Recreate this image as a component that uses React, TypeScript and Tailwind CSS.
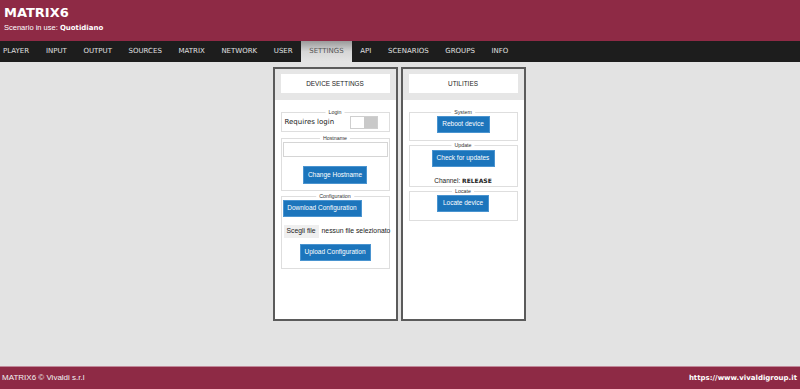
import React from "react";

const NAV = ["PLAYER", "INPUT", "OUTPUT", "SOURCES", "MATRIX", "NETWORK", "USER", "SETTINGS", "API", "SCENARIOS", "GROUPS", "INFO"];

const sans = "font-['Liberation_Sans',Arial,sans-serif]";
const verd = "font-['DejaVu_Sans',Verdana,sans-serif]";

function Btn({ label, w }: { label: string; w: string }) {
  return (
    <button
      className={`${w} bg-[#1c75bc] border border-[#4a94d0] text-white text-[6.5px] ${sans} leading-none whitespace-nowrap`}
    >
      {label}
    </button>
  );
}

// fieldset-like box, the legend sits on the top border
function Group({ title, children, className = "" }: { title: string; children: React.ReactNode; className?: string }) {
  return (
    <div className={`relative border border-[#dedede] ${className}`}>
      <span
        className={`absolute -top-[4px] left-1/2 -translate-x-1/2 bg-white px-[3px] text-[5.3px] leading-[6px] text-[#333] whitespace-nowrap ${sans}`}
      >
        {title}
      </span>
      {children}
    </div>
  );
}

function Panel({ title, children }: { title: string; children: React.ReactNode }) {
  return (
    <div className="w-[125px] h-[254px] border-2 border-[#5b5b5b] bg-white flex flex-col">
      <div className="bg-[#e6e6e6] px-[6px] pt-[5px] pb-[7px]">
        <div className={`bg-white h-[19px] flex items-center justify-center text-[6.4px] text-[#222] ${sans}`}>
          {title}
        </div>
      </div>
      <div className="px-[6px] pt-[12px] flex flex-col">{children}</div>
    </div>
  );
}

export default function App() {
  return (
    <div className="h-screen flex flex-col bg-[#e3e3e3]">
      {/* header */}
      <div className="h-[41px] bg-[#8e2a45] px-[4px] pt-[5px] text-white">
        <div className={`${verd} font-bold text-[13px] leading-[15px]`}>MATRIX6</div>
        <div className={`mt-[3px] text-[7.5px] leading-[9px] ${sans}`}>
          Scenario in use: <span className={`${verd} font-bold text-[7px]`}>Quotidiano</span>
        </div>
      </div>

      {/* nav */}
      <div className="h-[21px] bg-[#1d1d1d] flex">
        {NAV.map((item, i) => (
          <div
            key={item}
            className={`h-full flex items-center ${i === 0 ? "pl-[3px] pr-[8.5px]" : "px-[8.3px]"} text-[7px] ${verd} ${
              item === "SETTINGS"
                ? "bg-gradient-to-b from-[#9a9a9a] via-[#d6d6d6] to-[#e4e4e4] text-[#555]"
                : "text-[#e0e0e0]"
            }`}
          >
            {item}
          </div>
        ))}
      </div>

      {/* content */}
      <div className="flex-1 flex justify-center gap-[3px] pt-[5px] pr-[2px]">
        <Panel title="DEVICE SETTINGS">
          <Group title="Login" className="h-[20px] pl-[3px] pt-[3px]">
            <div className="h-[13px] flex items-center justify-between">
              <span className={`${verd} text-[7px] text-[#222]`}>Requires login</span>
              <div className="w-[28px] h-[13px] border border-[#cfcfcf] bg-[#c9c9c9] flex mr-[11px]">
                <div className="w-[13px] h-full bg-white" />
              </div>
            </div>
          </Group>
          <Group title="Hostname" className="h-[53px] px-[1px] pt-[3px] mt-[6px]">
            <input className="block w-full h-[15px] border border-[#d5d5d5] bg-white" />
            <div className="flex justify-center mt-[9px]">
              <Btn label="Change Hostname" w="w-[64px] h-[18px]" />
            </div>
          </Group>
          <Group title="Configuration" className="h-[73px] px-[1px] pt-[3px] mt-[5px]">
            <div className="flex">
              <Btn label="Download Configuration" w="w-[79px] h-[17px]" />
            </div>
            <div className={`flex items-center mt-[8px] ml-[1px] ${sans} text-[6.8px] text-[#222] whitespace-nowrap`}>
              <span className="bg-[#efefef] px-[3px] h-[13px] flex items-center">Scegli file</span>
              <span className="ml-[3px]">nessun file selezionato</span>
            </div>
            <div className="flex justify-center mt-[6px]">
              <Btn label="Upload Configuration" w="w-[71px] h-[17px]" />
            </div>
          </Group>
        </Panel>

        <Panel title="UTILITIES">
          <Group title="System" className="h-[29px] pt-[3px]">
            <div className="flex justify-center">
              <Btn label="Reboot device" w="w-[53px] h-[17px]" />
            </div>
          </Group>
          <Group title="Update" className="h-[42px] pt-[4px] mt-[4px]">
            <div className="flex justify-center">
              <Btn label="Check for updates" w="w-[63px] h-[17px]" />
            </div>
            <div className={`text-center mt-[10px] text-[6.5px] leading-[8px] text-[#222] ${sans}`}>
              Channel: <span className={`${verd} font-bold text-[6px]`}>RELEASE</span>
            </div>
          </Group>
          <Group title="Locate" className="h-[30px] pt-[3px] mt-[4px]">
            <div className="flex justify-center">
              <Btn label="Locate device" w="w-[52px] h-[17px]" />
            </div>
          </Group>
        </Panel>
      </div>

      {/* footer */}
      <div className="h-[23px] bg-[#8e2a45] border-t border-[#c0899a] flex items-center justify-between px-[2px] text-white">
        <span className={`${sans} text-[8px] text-[#f2f2f2]`}>MATRIX6 © Vivaldi s.r.l</span>
        <span className={`${verd} font-bold text-[7px] mr-[1px]`}>https://www.vivaldigroup.it</span>
      </div>
    </div>
  );
}
